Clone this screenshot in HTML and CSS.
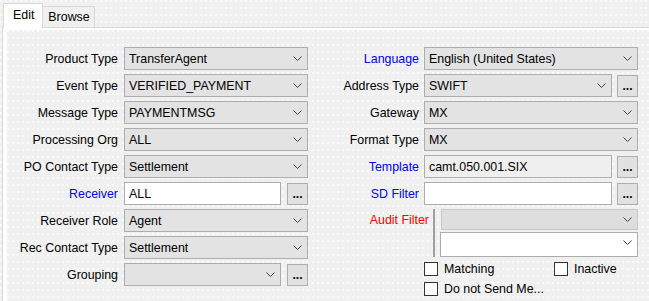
FILE: index.html
```html
<!DOCTYPE html>
<html lang="en">
  <head>
    <meta charset="utf-8">
    <title>Message Config</title>
    <link rel="stylesheet" href="styles.css">
  </head>
  <body>
    <div class="tabs">
      <div class="tab active">Edit</div>
      <div class="tab">Browse</div>
    </div>
    <div class="page">
      <div class="panel">
        <div class="col col-left">
          <div class="row"><span class="lbl">Product Type</span>
            <div class="combo wide"><span>TransferAgent</span><svg class="chev" width="9" height="5"><polyline points="0.5,0.5 4.5,4.5 8.5,0.5"/></svg></div></div>
          <div class="row"><span class="lbl">Event Type</span>
            <div class="combo wide"><span>VERIFIED_PAYMENT</span><svg class="chev" width="9" height="5"><polyline points="0.5,0.5 4.5,4.5 8.5,0.5"/></svg></div></div>
          <div class="row"><span class="lbl">Message Type</span>
            <div class="combo wide"><span>PAYMENTMSG</span><svg class="chev" width="9" height="5"><polyline points="0.5,0.5 4.5,4.5 8.5,0.5"/></svg></div></div>
          <div class="row"><span class="lbl">Processing Org</span>
            <div class="combo wide"><span>ALL</span><svg class="chev" width="9" height="5"><polyline points="0.5,0.5 4.5,4.5 8.5,0.5"/></svg></div></div>
          <div class="row"><span class="lbl">PO Contact Type</span>
            <div class="combo wide"><span>Settlement</span><svg class="chev" width="9" height="5"><polyline points="0.5,0.5 4.5,4.5 8.5,0.5"/></svg></div></div>
          <div class="row"><span class="lbl link">Receiver</span>
            <div class="text short">ALL</div><button class="dots">...</button></div>
          <div class="row"><span class="lbl">Receiver Role</span>
            <div class="combo wide"><span>Agent</span><svg class="chev" width="9" height="5"><polyline points="0.5,0.5 4.5,4.5 8.5,0.5"/></svg></div></div>
          <div class="row"><span class="lbl">Rec Contact Type</span>
            <div class="combo wide"><span>Settlement</span><svg class="chev" width="9" height="5"><polyline points="0.5,0.5 4.5,4.5 8.5,0.5"/></svg></div></div>
          <div class="row"><span class="lbl">Grouping</span>
            <div class="combo short"><span></span><svg class="chev" width="9" height="5"><polyline points="0.5,0.5 4.5,4.5 8.5,0.5"/></svg></div><button class="dots">...</button></div>
        </div>

        <div class="col col-right">
          <div class="row"><span class="lbl link">Language</span>
            <div class="combo wide"><span>English (United States)</span><svg class="chev" width="9" height="5"><polyline points="0.5,0.5 4.5,4.5 8.5,0.5"/></svg></div></div>
          <div class="row"><span class="lbl">Address Type</span>
            <div class="combo short"><span>SWIFT</span><svg class="chev" width="9" height="5"><polyline points="0.5,0.5 4.5,4.5 8.5,0.5"/></svg></div><button class="dots">...</button></div>
          <div class="row"><span class="lbl">Gateway</span>
            <div class="combo wide"><span>MX</span><svg class="chev" width="9" height="5"><polyline points="0.5,0.5 4.5,4.5 8.5,0.5"/></svg></div></div>
          <div class="row"><span class="lbl">Format Type</span>
            <div class="combo wide"><span>MX</span><svg class="chev" width="9" height="5"><polyline points="0.5,0.5 4.5,4.5 8.5,0.5"/></svg></div></div>
          <div class="row"><span class="lbl link">Template</span>
            <div class="text short readonly">camt.050.001.SIX</div><button class="dots">...</button></div>
          <div class="row"><span class="lbl link">SD Filter</span>
            <div class="text short"></div><button class="dots">...</button></div>
          <div class="row audit-row"><span class="lbl alert">Audit Filter</span>
            <div class="audit">
              <div class="combo disabled"><span></span><svg class="chev" width="9" height="5"><polyline points="0.5,0.5 4.5,4.5 8.5,0.5"/></svg></div>
              <div class="combo white"><span></span><svg class="chev" width="9" height="5"><polyline points="0.5,0.5 4.5,4.5 8.5,0.5"/></svg></div>
            </div>
          </div>
          <div class="checks">
            <div class="check-line">
              <label class="check matching"><span class="box"></span>Matching</label>
              <label class="check"><span class="box"></span>Inactive</label>
            </div>
            <div class="check-line">
              <label class="check"><span class="box"></span>Do not Send Me...</label>
            </div>
          </div>
        </div>
      </div>
    </div>
  </body>
</html>
```

FILE: styles.css
```css
html, body {
  margin: 0;
  height: 100%;
  overflow: hidden;
}
body {
  font-family: "Liberation Sans", Arial, sans-serif;
  font-size: 12.4px;
  color: #000;
  background: #f0f0f0 radial-gradient(circle at 1px 1px, #fff 0.6px, transparent 0.9px);
  background-size: 5px 7px;
}
.tabs {
  display: flex;
  align-items: flex-end;
  height: 27px;
  padding-left: 3px;
}
.tab {
  height: 20px;
  line-height: 20px;
  padding: 0 4px 0 5px;
  border: 1px solid #d9d9d9;
  border-bottom: none;
  border-left: none;
  background: #f0f0f0;
}
.tab.active {
  height: 24px;
  line-height: 23px;
  padding: 0 8px 0 9px;
  border-left: 1px solid #d9d9d9;
  background: #fff;
  margin-bottom: -1px;
  position: relative;
}
.page {
  box-sizing: border-box;
  margin-left: 2px;
  border-top: 1px solid #d9d9d9;
  border-left: 1px solid #d9d9d9;
  padding: 2px 0 0 4px;
  background: #fff;
  height: calc(100% - 27px);
}
.panel {
  box-sizing: border-box;
  display: flex;
  padding-top: 17px;
  height: 100%;
  background: #f0f0f0 radial-gradient(circle at 1px 1px, #fff 0.6px, transparent 0.9px);
  background-size: 5px 7px;
}
.col {
  display: flex;
  flex-direction: column;
  gap: 4px;
}
.row {
  display: flex;
  align-items: center;
  height: 23px;
  gap: 5px;
}
.col-left .row {
  gap: 6px;
}
.lbl {
  width: 111px;
  flex: none;
  text-align: right;
  white-space: nowrap;
}
.lbl.link {
  color: #0000ff;
}
.lbl.alert {
  color: #ff0000;
}
.combo, .text {
  box-sizing: border-box;
  height: 23px;
  border: 1px solid #adadad;
  display: flex;
  align-items: center;
  padding: 0 5px 0 4px;
  white-space: nowrap;
  overflow: hidden;
}
.combo {
  justify-content: space-between;
  background: #e3e3e3;
}
.text {
  background: #fff;
}
.text.readonly {
  background: #efefef;
}
.chev {
  flex: none;
}
.chev polyline {
  fill: none;
  stroke: #404040;
  stroke-width: 1;
}
.col-left .wide {
  width: 184px;
}
.col-left .short {
  width: 157px;
}
.col-right .wide {
  width: 214px;
}
.col-right .short {
  width: 188px;
}
.dots {
  box-sizing: border-box;
  width: 21px;
  height: 22px;
  border: 1px solid #adadad;
  background: #e1e1e1;
  font: bold 12px "Liberation Sans", Arial, sans-serif;
  padding: 0;
  line-height: 20px;
  color: #000;
}
.audit-row {
  height: 48px;
  align-items: flex-start;
  gap: 4px;
}
.audit-row .lbl {
  width: 121px;
  line-height: 23px;
}
.audit {
  width: 205px;
  height: 48px;
  box-sizing: border-box;
  border-left: 2px solid #a0a0a0;
  padding-left: 6px;
  display: flex;
  flex-direction: column;
  gap: 2px;
  overflow: hidden;
}
.combo.disabled {
  background: #dedede;
  border-color: #c8c8c8;
  width: 197px;
}
.combo.white {
  background: #fff;
  height: 27px;
  width: 198px;
  margin-left: -1px;
  padding-bottom: 4px;
}
.checks {
  margin-left: 116px;
  margin-top: 1px;
  display: flex;
  flex-direction: column;
}
.check-line {
  display: flex;
  height: 20px;
}
.check {
  display: flex;
  align-items: flex-start;
  gap: 6px;
  line-height: 14px;
}
.check.matching {
  width: 130px;
}
.box {
  box-sizing: border-box;
  width: 14px;
  height: 14px;
  border: 1px solid #333;
  background: #fff;
}
```
